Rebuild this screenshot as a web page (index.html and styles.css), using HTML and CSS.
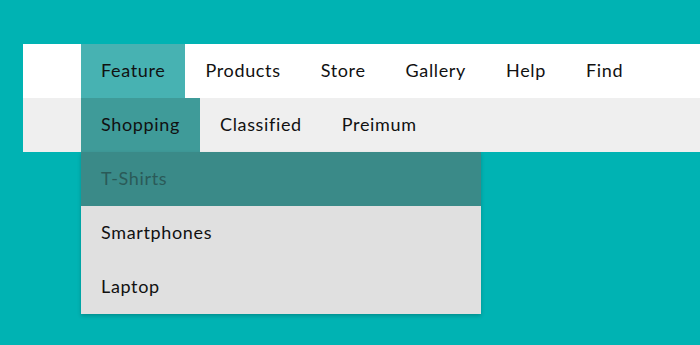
FILE: index.html
```html
<!DOCTYPE html>
<html lang="en">
<head>
  <meta charset="UTF-8"/>
  <meta name="viewport" content="width=device-width,initial-scale=1"/>
  <title>Dropdown Menu</title>
  <link rel="stylesheet" href="styles.css">
</head>
<body>

  <!-- MAIN NAV -->
  <nav class="nav">
    <ul class="menu">
      <li class="active">Feature</li>
      <li>Products</li>
      <li>Store</li>
      <li>Gallery</li>
      <li>Help</li>
      <li>Find</li>
    </ul>

    <!-- Sub menu for Feature -->
    <ul class="menu sub">
      <li class="active has-drop">Shopping
        <ul class="drop">
          <li class="active">T-Shirts</li>
          <li>Smartphones</li>
          <li>Laptop</li>
        </ul>
      </li>
      <li>Classified</li>
      <li>Preimum</li>
    </ul>
  </nav>

</body>
</html>
```
FILE: styles.css
```css
* { box-sizing: border-box; }
body {
  margin: 0;
  min-height: 100vh;
  font-family: 'Lato', sans-serif;
  background: #00b3b3;
  color: #111;
  padding: 44px 0 0 23px;
}
.nav {
  background: #fff;
}
.menu {
  list-style: none;
  margin: 0;
  padding: 0 0 0 58px;
  display: flex;
}
.menu li {
  padding: 0 20px;
  height: 54px;
  line-height: 52px;
  font-size: 18px;
  letter-spacing: 0.65px;
  cursor: pointer;
}
.menu li.active {
  background: #47b2b2;
}
.sub {
  background: #efefef;
}
.sub li.active {
  background: #3f9b99;
}
.has-drop {
  position: relative;
}
.drop {
  list-style: none;
  margin: 0;
  padding: 0;
  position: absolute;
  top: 54px;
  left: 0;
  width: 400px;
  background: #e0e0e0;
  box-shadow: 0 2px 4px rgba(0,0,0,0.2);
}
.drop li {
  background: #e0e0e0;
}
.drop li.active {
  background: #3a8a88;
  color: #2a5a58;
}
```
